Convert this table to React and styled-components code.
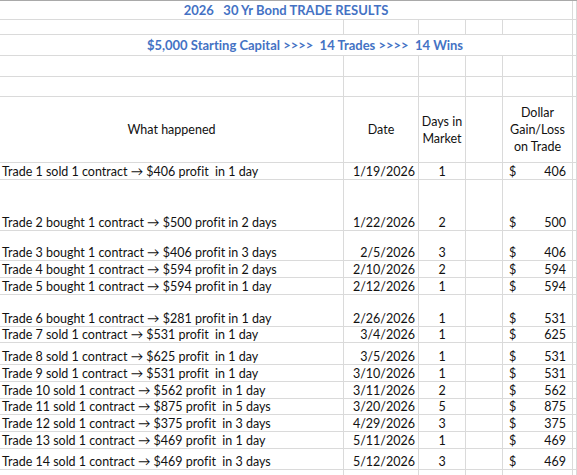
import React from 'react';
import styled, { createGlobalStyle } from 'styled-components';

const GlobalStyle = createGlobalStyle`
  body {
    margin: 0;
    background: #fff;
    font-family: Lato, "Open Sans", sans-serif;
    font-variant-ligatures: none;
    color: #111;
  }
`;

const Sheet = styled.div`
  width: 577px;
  height: 475px;
  overflow: hidden;
  border-top: 1px solid #a9a9a9;
  box-sizing: border-box;
`;

const Row = styled.div`
  display: grid;
  grid-template-columns: 344px 75px 47px 37px 70px 1fr;
  height: ${(p) => p.$h}px;
`;

const Cell = styled.div`
  box-sizing: border-box;
  border-right: 1px solid #dadada;
  border-bottom: 1px solid #dadada;
  display: flex;
  align-items: flex-end;
  justify-content: ${(p) => p.$align || 'flex-start'};
  padding: 0 ${(p) => p.$pr || 0}px 0 ${(p) => p.$pl || 0}px;
  font-size: 12.5px;
  line-height: 15px;
  white-space: pre;
  overflow: hidden;
`;

const Merged = styled(Cell)`
  grid-column: 1 / 6;
  align-items: center;
  justify-content: center;
  padding-left: ${(p) => p.$shift || 0}px;
  color: #4472c4;
  font-weight: 700;
  font-size: 13px;
`;

const HeadCell = styled(Cell)`
  align-items: center;
  justify-content: center;
  text-align: center;
  white-space: normal;
  line-height: 17px;
`;

const Money = styled(Cell)`
  justify-content: space-between;
  padding: 0 6px 0 6px;
`;

const trades = [
  ['Trade 1 sold 1 contract \u2192 $406 profit  in 1 day', '1/19/2026', 1, 406, 17],
  ['Trade 2 bought 1 contract \u2192 $500 profit in 2 days', '1/22/2026', 2, 500, 51],
  ['Trade 3 bought 1 contract \u2192 $406 profit in 3 days', '2/5/2026', 3, 406, 30],
  ['Trade 4 bought 1 contract \u2192 $594 profit in 2 days', '2/10/2026', 2, 594, 17],
  ['Trade 5 bought 1 contract \u2192 $594 profit in 1 day', '2/12/2026', 1, 594, 17],
  ['Trade 6 bought 1 contract \u2192 $281 profit in 1 day', '2/26/2026', 1, 531, 32],
  ['Trade 7 sold 1 contract \u2192 $531 profit  in 1 day', '3/4/2026', 1, 625, 16],
  ['Trade 8 sold 1 contract \u2192 $625 profit  in 1 day', '3/5/2026', 1, 531, 22],
  ['Trade 9 sold 1 contract \u2192 $531 profit  in 1 day', '3/10/2026', 1, 531, 17],
  ['Trade 10 sold 1 contract \u2192 $562 profit  in 1 day', '3/11/2026', 2, 562, 17],
  ['Trade 11 sold 1 contract \u2192 $875 profit  in 5 days', '3/20/2026', 5, 875, 16],
  ['Trade 12 sold 1 contract \u2192 $375 profit  in 3 days', '4/29/2026', 3, 375, 17],
  ['Trade 13 sold 1 contract \u2192 $469 profit  in 1 day', '5/11/2026', 1, 469, 17],
  ['Trade 14 sold 1 contract \u2192 $469 profit  in 3 days', '5/12/2026', 3, 469, 21],
];

const Blank = ({ h }) => (
  <Row $h={h}>
    <Cell /><Cell /><Cell /><Cell /><Cell /><Cell />
  </Row>
);

const App = () => (
  <>
    <GlobalStyle />
    <Sheet>
      <Row $h={19}>
        <Merged>{'2026   30 Yr Bond TRADE RESULTS'}</Merged>
        <Cell />
      </Row>
      <Blank h={15} />
      <Row $h={21}>
        <Merged $shift={38}>{'$5,000 Starting Capital >>>>  14 Trades >>>>  14 Wins'}</Merged>
        <Cell />
      </Row>
      <Blank h={21} />
      <Blank h={20} />
      <Row $h={66}>
        <HeadCell>What happened</HeadCell>
        <HeadCell>Date</HeadCell>
        <HeadCell>Days in Market</HeadCell>
        <HeadCell />
        <HeadCell>Dollar Gain/Loss on Trade</HeadCell>
        <Cell />
      </Row>
      {trades.map(([what, date, days, amt, h]) => (
        <Row key={what} $h={h}>
          <Cell $pl={2}>{what}</Cell>
          <Cell $align="flex-end" $pr={3}>{date}</Cell>
          <Cell $align="center">{days}</Cell>
          <Cell />
          <Money><span>$</span><span>{amt}</span></Money>
          <Cell />
        </Row>
      ))}
      <Blank h={20} />
    </Sheet>
  </>
);

export default App;
